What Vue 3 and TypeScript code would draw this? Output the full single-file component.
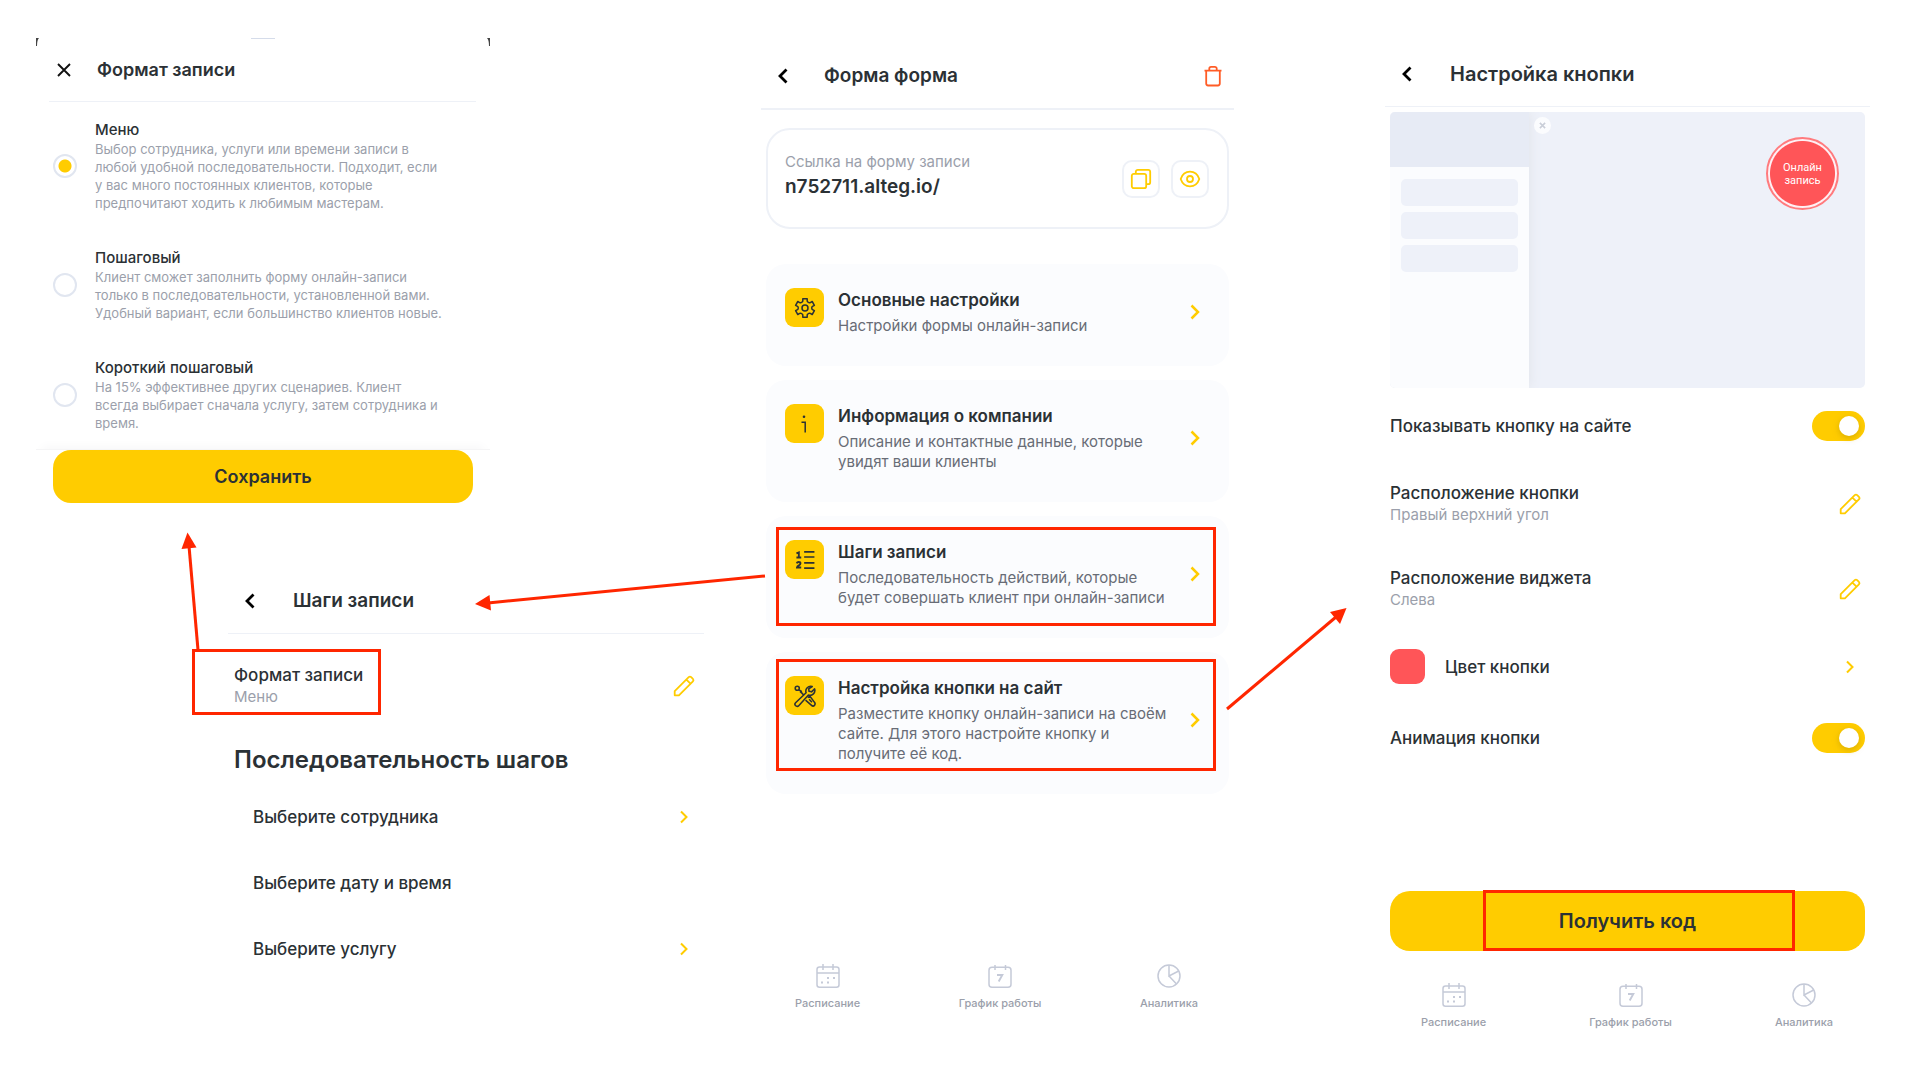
<script setup lang="ts">
import { ref } from 'vue'

interface FormatOption {
  id: string
  title: string
  text: string
}

interface SettingsCard {
  icon: string
  title: string
  text: string
  mark?: string
}

const formats: FormatOption[] = [
  {
    id: 'menu',
    title: 'Меню',
    text: 'Выбор сотрудника, услуги или времени записи в\nлюбой удобной последовательности. Подходит, если\nу вас много постоянных клиентов, которые\nпредпочитают ходить к любимым мастерам.',
  },
  {
    id: 'steps',
    title: 'Пошаговый',
    text: 'Клиент сможет заполнить форму онлайн-записи\nтолько в последовательности, установленной вами.\nУдобный вариант, если большинство клиентов новые.',
  },
  {
    id: 'short',
    title: 'Короткий пошаговый',
    text: 'На 15% эффективнее других сценариев. Клиент\nвсегда выбирает сначала услугу, затем сотрудника и\nвремя.',
  },
]

const steps = [
  { title: 'Выберите сотрудника', more: true },
  { title: 'Выберите дату и время', more: false },
  { title: 'Выберите услугу', more: true },
]

const cards: SettingsCard[] = [
  { icon: 'gear', title: 'Основные настройки', text: 'Настройки формы онлайн-записи' },
  { icon: 'info', title: 'Информация о компании', text: 'Описание и контактные данные, которые\nувидят ваши клиенты' },
  { icon: 'list', title: 'Шаги записи', text: 'Последовательность действий, которые\nбудет совершать клиент при онлайн-записи', mark: 'mark-steps' },
  { icon: 'tools', title: 'Настройка кнопки на сайт', text: 'Разместите кнопку онлайн-записи на своём\nсайте. Для этого настройте кнопку и\nполучите её код.', mark: 'mark-site' },
]

const tabs = [
  { icon: 'calendar', title: 'Расписание' },
  { icon: 'day', title: 'График работы' },
  { icon: 'pie', title: 'Аналитика' },
]

const places = [
  { title: 'Расположение кнопки', value: 'Правый верхний угол' },
  { title: 'Расположение виджета', value: 'Слева' },
]

const format = ref('menu')
const showButton = ref(true)
const animateButton = ref(true)
</script>

<template>
  <main class="board">
    <svg class="sprite" aria-hidden="true">
      <symbol id="i-back" viewBox="0 0 24 24"><path d="M15.500 5.500 9 12l6.500 6.500" fill="none" stroke="#000" stroke-width="2.800" /></symbol>
      <symbol id="i-close" viewBox="0 0 24 24"><path d="M6 6l12 12M18 6 6 18" fill="none" stroke="#111" stroke-width="1.900" /></symbol>
      <symbol id="i-next" viewBox="0 0 24 24"><path d="M9 6.500l5.500 5.500L9 17.500" fill="none" stroke="currentColor" stroke-width="2" /></symbol>
      <symbol id="i-next-bold" viewBox="0 0 24 24"><path d="M8.500 5.500 15 12l-6.500 6.500" fill="none" stroke="currentColor" stroke-width="2.500" /></symbol>
      <symbol id="i-pencil" viewBox="0 0 24 24">
        <path d="M2.700 21.300v-4.100L16.700 3.200a1.800 1.800 0 0 1 2.500 0l1.700 1.700a1.800 1.800 0 0 1 0 2.500L6.900 21.300zM14.400 5.600l4.100 4.100" fill="none" stroke="currentColor" stroke-width="1.800" stroke-linejoin="round" />
      </symbol>
      <symbol id="i-trash" viewBox="0 0 24 24">
        <path d="M3.500 6.600h17M5.200 6.600v13a1.900 1.900 0 0 0 1.900 1.900h9.800a1.900 1.900 0 0 0 1.900-1.900v-13M8.300 6.400V4.600a1.800 1.800 0 0 1 1.800-1.800h3.800a1.800 1.800 0 0 1 1.800 1.800v1.800" fill="none" stroke="#ff5c26" stroke-width="1.800" />
      </symbol>
      <symbol id="i-copy" viewBox="0 0 24 24">
        <g fill="none" stroke="currentColor" stroke-width="1.800">
          <rect x="2.800" y="6.800" width="14.400" height="14.400" rx="2" />
          <path d="M6.800 6.500V4.800a2 2 0 0 1 2-2h10.400a2 2 0 0 1 2 2v10.400a2 2 0 0 1-2 2h-1.700" />
        </g>
      </symbol>
      <symbol id="i-eye" viewBox="0 0 24 24">
        <g fill="none" stroke="currentColor" stroke-width="1.800">
          <path d="M2.700 12C4.300 7.200 7.800 4.700 12 4.700s7.700 2.500 9.300 7.300c-1.600 4.800-5.100 7.300-9.300 7.300S4.300 16.800 2.700 12z" stroke-linejoin="round" />
          <circle cx="12" cy="12" r="3" />
        </g>
      </symbol>
      <symbol id="i-gear" viewBox="0 0 24 24">
        <g fill="none" stroke="currentColor" stroke-width="1.500" stroke-linejoin="round">
          <circle cx="12" cy="12" r="3" />
          <path d="M9.800 2.700h4.400v2.200q0 .8.800 1.200l.9.500q.7.400 1.400 0l1.900-1.100 2.200 3.800-1.900 1.100q-.7.400-.7 1.200v.8q0 .8.700 1.200l1.900 1.100-2.200 3.800-1.900-1.100q-.7-.4-1.400 0l-.9.500q-.8.400-.8 1.200v2.200H9.800v-2.200q0-.8-.8-1.200l-.9-.5q-.7-.4-1.400 0l-1.900 1.100-2.200-3.800 1.900-1.100q.7-.4.700-1.200v-.8q0-.8-.7-1.200L2.600 9.300l2.200-3.800 1.900 1.100q.7.400 1.400 0l.9-.5q.8-.4.800-1.200z" />
        </g>
      </symbol>
      <symbol id="i-info" viewBox="0 0 24 24">
        <circle cx="11" cy="4.800" r="1.300" fill="currentColor" />
        <path d="M8.500 10.200h3.700V20.500" fill="none" stroke="currentColor" stroke-width="1.500" />
      </symbol>
      <symbol id="i-list" viewBox="-2 -1 28 27">
        <g fill="none" stroke="currentColor">
          <path d="M11 3h12M11 9h12M11 15.800h12M11 22h12" stroke-width="2" />
          <path d="M2 4.800l2.800-1.200v6.200M2 9.600h5.600M2.300 16.400q.5-1.500 2.400-1.500 2 0 2 1.600 0 1.100-1.900 2.300Q2.900 19.900 2.700 21.200H7.600" stroke-width="2.200" />
        </g>
      </symbol>
      <symbol id="i-tools" viewBox="-1 -1 26 26">
        <g fill="none" stroke="currentColor" stroke-width="1.700" stroke-linejoin="round">
          <circle cx="3.600" cy="3.600" r="2.200" />
          <path d="M5.400 5.400l2.300 1.200 1 2.400 2.100 2.100M8.700 9 6.600 7" />
          <path d="M19.800 1.700a5.300 5.300 0 0 0-6.600 6.800L1.800 19.300a2.300 2.300 0 0 0 3.400 3.200L15.700 11a5.300 5.300 0 0 0 6.700-6.700l-3.300 3.200-2.700-.6-.4-2.500z" />
          <path d="M15 13.800l2.300-1.700 5 6.800a2.200 2.200 0 0 1-3.200 3.200l-6.500-5.700M16.500 15.500l3 3.200" />
        </g>
      </symbol>
      <symbol id="i-calendar" viewBox="0 0 24 24">
        <g fill="none" stroke="currentColor" stroke-width="1.500">
          <rect x="1" y="3" width="22" height="20.200" rx="2.500" />
          <path d="M1 9h22M7 0v6M17 0v6" />
        </g>
        <path d="M11 13h2v2h-2zM17 13h2v2h-2zM5 17.500h2v2H5zM11 17.500h2v2h-2z" fill="currentColor" />
      </symbol>
      <symbol id="i-day" viewBox="0 0 24 24">
        <g fill="none" stroke="currentColor" stroke-width="1.500">
          <rect x="1" y="3.200" width="22" height="20" rx="3" />
          <path d="M7 1v5M17.500 1v5" />
          <path d="M9 11h5.300l-3.600 6.500" stroke-width="1.900" />
        </g>
      </symbol>
      <symbol id="i-pie" viewBox="0 0 24 24">
        <g fill="none" stroke="currentColor" stroke-width="1.500">
          <circle cx="12" cy="12" r="11" />
          <path d="M12 1v11l9.700-5M12 12l7.500 8" />
        </g>
      </symbol>
    </svg>

    <div class="col col-left">
      <section class="sheet">
        <svg class="corner corner-left" viewBox="0 0 4 8" aria-hidden="true"><path d="M0 0h3Q1 2 1 8H0z" /></svg>
        <svg class="corner corner-right" viewBox="0 0 4 8" aria-hidden="true"><path d="M4 0H1q2 2 2 8h1z" /></svg>
        <span class="handle"></span>
        <header class="head head-sheet">
          <button class="plain" type="button" aria-label="Закрыть"><svg class="ic"><use href="#i-close" /></svg></button>
          <h2>Формат записи</h2>
        </header>
        <div class="options" role="radiogroup" aria-label="Формат записи">
          <label v-for="o in formats" :key="o.id" class="option">
            <input v-model="format" type="radio" name="format" :value="o.id" />
            <span class="option-body">
              <span class="option-title">{{ o.title }}</span>
              <span class="option-text">{{ o.text }}</span>
            </span>
          </label>
        </div>
        <footer class="sheet-foot">
          <button class="save" type="button">Сохранить</button>
        </footer>
      </section>

      <section class="steps">
        <header class="head head-steps">
          <button class="plain" type="button" aria-label="Назад"><svg class="ic"><use href="#i-back" /></svg></button>
          <h2>Шаги записи</h2>
        </header>
        <div class="row row-format">
          <span class="pair">
            <span class="row-title">Формат записи</span>
            <span class="row-sub">Меню</span>
            <span class="mark mark-format"></span>
          </span>
          <button class="plain gold" type="button" aria-label="Изменить формат записи"><svg class="ic"><use href="#i-pencil" /></svg></button>
        </div>
        <h3>Последовательность шагов</h3>
        <ul class="step-list">
          <li v-for="s in steps" :key="s.title">
            <span>{{ s.title }}</span>
            <button v-if="s.more" class="plain gold" type="button" :aria-label="s.title"><svg class="ic"><use href="#i-next" /></svg></button>
          </li>
        </ul>
      </section>
    </div>

    <section class="col col-form">
      <header class="head head-form">
        <button class="plain" type="button" aria-label="Назад"><svg class="ic"><use href="#i-back" /></svg></button>
        <h2>Форма форма</h2>
        <button class="plain trash" type="button" aria-label="Удалить"><svg class="ic"><use href="#i-trash" /></svg></button>
      </header>
      <div class="link-card">
        <div class="link-text">
          <span class="link-label">Ссылка на форму записи</span>
          <a class="link-url" href="#">n752711.alteg.io/</a>
        </div>
        <button class="square" type="button" aria-label="Скопировать"><svg class="ic"><use href="#i-copy" /></svg></button>
        <button class="square" type="button" aria-label="Посмотреть"><svg class="ic"><use href="#i-eye" /></svg></button>
      </div>
      <nav class="cards">
        <a v-for="c in cards" :key="c.icon" class="card" href="#">
          <span class="tile"><svg class="ic"><use :href="'#i-' + c.icon" /></svg></span>
          <span class="card-body">
            <span class="card-title">{{ c.title }}</span>
            <span class="card-text">{{ c.text }}</span>
          </span>
          <svg class="ic gold"><use href="#i-next-bold" /></svg>
          <span v-if="c.mark" class="mark" :class="c.mark"></span>
        </a>
      </nav>
      <nav class="tabs tabs-form">
        <a v-for="t in tabs" :key="t.icon" href="#"><svg class="ic"><use :href="'#i-' + t.icon" /></svg>{{ t.title }}</a>
      </nav>
    </section>

    <section class="col col-button">
      <header class="head head-button">
        <button class="plain" type="button" aria-label="Назад"><svg class="ic"><use href="#i-back" /></svg></button>
        <h2>Настройка кнопки</h2>
      </header>
      <div class="settings">
        <div class="preview">
          <div class="side">
            <div class="side-head"></div>
            <div class="side-list"><i></i><i></i><i></i></div>
          </div>
          <span class="side-close"><svg viewBox="0 0 8 8"><path d="M1 1l6 6M7 1 1 7" fill="none" stroke="#c9ced8" stroke-width="1.800" /></svg></span>
          <button class="round" type="button">Онлайн<br />запись</button>
        </div>
        <label class="row row-show">
          <span class="row-title">Показывать кнопку на сайте</span>
          <input v-model="showButton" class="switch" type="checkbox" />
        </label>
        <div v-for="p in places" :key="p.title" class="row row-place">
          <span class="pair">
            <span class="row-title">{{ p.title }}</span>
            <span class="row-sub">{{ p.value }}</span>
          </span>
          <button class="plain gold" type="button" :aria-label="p.title"><svg class="ic"><use href="#i-pencil" /></svg></button>
        </div>
        <div class="row row-color">
          <span class="swatch"></span>
          <span class="row-title">Цвет кнопки</span>
          <button class="plain gold" type="button" aria-label="Цвет кнопки"><svg class="ic"><use href="#i-next" /></svg></button>
        </div>
        <label class="row row-anim">
          <span class="row-title">Анимация кнопки</span>
          <input v-model="animateButton" class="switch" type="checkbox" />
        </label>
        <button class="get-code" type="button">Получить код<span class="mark mark-code"></span></button>
      </div>
      <nav class="tabs tabs-button">
        <a v-for="t in tabs" :key="t.icon" href="#"><svg class="ic"><use :href="'#i-' + t.icon" /></svg>{{ t.title }}</a>
      </nav>
    </section>

    <svg class="arrows" viewBox="0 0 1920 1080" preserveAspectRatio="none" aria-hidden="true">
      <g fill="none" stroke="#ff2600" stroke-width="3">
        <path d="M198 650 189 546" />
        <path d="M765 576 488 603" />
        <path d="M1227 709 1336 617" />
      </g>
      <g fill="#ff2600">
        <path d="M187.500 532.500 196.500 547.500 181.500 549z" />
        <path d="M475 604 489.500 595 491 610.500z" />
        <path d="M1346.500 608 1340 624 1330 612z" />
      </g>
    </svg>
  </main>
</template>

<style>
body {
  background: #fff;
}
</style>

<style scoped>
.board {
  --ink: #2b3135;
  --muted: #9b9fab;
  --gold: #fc0;
  --red: #ff2600;
  --line: #eef1f7;
  position: relative;
  box-sizing: border-box;
  min-height: 100vh;
  padding: 38px 50px 0 36px;
  display: grid;
  grid-template-columns: 668fr 57fr 473fr 151fr 485fr;
  align-items: start;
  font-family: Inter, "Liberation Sans", sans-serif;
  color: var(--ink);
}
.board * {
  box-sizing: border-box;
}
.sprite {
  position: absolute;
  width: 0;
  height: 0;
}
h2,
h3,
ul {
  margin: 0;
  padding: 0;
  font-weight: 600;
}
a {
  color: inherit;
  text-decoration: none;
}
button {
  font-family: inherit;
  color: inherit;
  border: 0;
  padding: 0;
  cursor: pointer;
}
.plain {
  display: flex;
  background: none;
}
.gold {
  color: var(--gold);
}
.ic {
  display: block;
  flex: none;
  width: 24px;
  height: 24px;
}
.col-left {
  grid-column: 1;
}
.col-form {
  grid-column: 3;
  padding-top: 5px;
}
.col-button {
  grid-column: 5;
  padding-top: 3px;
}
.mark {
  position: absolute;
  border: 3px solid var(--red);
  pointer-events: none;
}
.arrows {
  position: absolute;
  inset: 0;
  width: 100%;
  height: 100%;
  pointer-events: none;
}

.head {
  display: flex;
  align-items: center;
  height: 66px;
  border-bottom: 1px solid var(--line);
  padding: 0 9px 0 10px;
}
.head h2 {
  margin-left: 31px;
  font-size: 20px;
  line-height: 24px;
}

/* booking format sheet */
.sheet {
  position: relative;
  max-width: 454px;
}
.corner {
  position: absolute;
  top: 0;
  width: 4px;
  height: 8px;
  fill: #444;
}
.corner-left {
  left: 0;
}
.corner-right {
  right: 0;
}
.handle {
  position: absolute;
  top: 0;
  left: 50%;
  width: 24px;
  height: 1px;
  margin-left: -12px;
  background: #d5dcea;
}
.head-sheet {
  height: 64px;
  margin: 0 14px 0 13px;
  padding: 0 3px;
}
.head-sheet h2 {
  margin-left: 21px;
  font-size: 18px;
}
.options {
  display: flex;
  flex-direction: column;
  gap: 36px;
  padding: 18px 17px 17px;
}
.option {
  display: flex;
  align-items: center;
  gap: 18px;
  cursor: pointer;
}
.option input {
  appearance: none;
  flex: none;
  width: 24px;
  height: 24px;
  margin: 0;
  border: 2px solid #e1e6f0;
  border-radius: 50%;
  background: #fff;
}
.option input:checked {
  background: radial-gradient(circle, var(--gold) 6px, #fff 7px);
}
.option-body {
  display: flex;
  flex-direction: column;
}
.option-title {
  font-size: 15px;
  line-height: 20px;
  font-weight: 500;
}
.option-text {
  font-size: 13px;
  line-height: 18px;
  color: var(--muted);
  white-space: pre;
}
.sheet-foot {
  border-top: 1px solid #f5f5f6;
  padding: 0 17px;
  box-shadow: 0 -8px 10px -6px #f7f7f8;
}
.save {
  display: block;
  width: 100%;
  height: 53px;
  border-radius: 18px;
  background: var(--gold);
  font-size: 18px;
  font-weight: 600;
}

/* booking steps */
.steps {
  margin: 65px 0 0 192px;
}
.head-steps h2,
.head-form h2 {
  font-size: 19px;
}
.row {
  display: flex;
  align-items: center;
  justify-content: space-between;
}
.pair {
  position: relative;
  display: flex;
  flex-direction: column;
}
.row-title {
  font-size: 17px;
  line-height: 22px;
  font-weight: 500;
}
.row-sub {
  font-size: 15px;
  line-height: 22px;
  color: var(--muted);
}
.row-format {
  padding: 30px 8px 0 6px;
}
.mark-format {
  top: -15px;
  right: -18px;
  bottom: -7px;
  left: -42px;
}
.steps h3 {
  margin: 36px 0 0 6px;
  font-size: 24px;
  line-height: 32px;
}
.step-list {
  list-style: none;
  padding: 8px 8px 0 25px;
}
.step-list li {
  display: flex;
  align-items: center;
  justify-content: space-between;
  height: 66px;
  font-size: 17px;
  font-weight: 500;
}

/* form screen */
.head-form {
  height: 67px;
  border-bottom-width: 2px;
}
.head-form h2 {
  margin-left: 29px;
}
.trash {
  margin-left: auto;
}
.link-card {
  display: flex;
  align-items: center;
  gap: 11px;
  margin: 18px 5px 0;
  height: 101px;
  padding: 0 18px 0 17px;
  border: 2px solid var(--line);
  border-radius: 24px;
}
.link-text {
  flex: 1;
  display: flex;
  flex-direction: column;
  padding-bottom: 7px;
}
.link-label {
  font-size: 15px;
  line-height: 24px;
  color: var(--muted);
}
.link-url {
  font-size: 19px;
  line-height: 26px;
  font-weight: 600;
}
.square {
  width: 38px;
  height: 38px;
  display: flex;
  align-items: center;
  justify-content: center;
  border: 2px solid var(--line);
  border-radius: 10px;
  background: #fff;
  color: var(--gold);
}
.cards {
  display: flex;
  flex-direction: column;
  gap: 14px;
  margin: 35px 5px 0;
}
.card {
  position: relative;
  display: flex;
  align-items: center;
  padding: 24px 22px 30px 19px;
  border-radius: 20px;
  background: #fbfcfe;
}
.tile {
  align-self: flex-start;
  flex: none;
  display: flex;
  align-items: center;
  justify-content: center;
  width: 39px;
  height: 39px;
  border-radius: 9px;
  background: var(--gold);
}
.card-body {
  flex: 1;
  display: flex;
  flex-direction: column;
  gap: 4px;
  margin-left: 14px;
}
.card-title {
  font-size: 17px;
  line-height: 24px;
  font-weight: 600;
}
.card-text {
  font-size: 15px;
  line-height: 20px;
  color: #686c76;
  white-space: pre;
}
.mark-steps {
  inset: 11px 13px 12px 10px;
}
.mark-site {
  inset: 7px 13px 23px 10px;
}
.tabs {
  display: flex;
  justify-content: space-between;
}
.tabs a {
  display: flex;
  flex-direction: column;
  align-items: center;
  gap: 8px;
  font-size: 11px;
  line-height: 14px;
  font-weight: 500;
  color: var(--muted);
}
.tabs .ic {
  color: #c5cad8;
}
.tabs-form {
  margin-top: 170px;
  padding: 0 36px 0 34px;
}

/* site button screen */
.settings {
  padding: 5px 5px 0;
}
.preview {
  position: relative;
  height: 276px;
  border-radius: 5px;
  background: #eef1f9;
  overflow: hidden;
}
.side {
  width: 139px;
  height: 100%;
  background: #fbfcfe;
  box-shadow: 0 0 12px #dfe2e8;
}
.side-head {
  height: 55px;
  background: #e7ebf5;
}
.side-list {
  display: flex;
  flex-direction: column;
  gap: 6px;
  padding: 12px 11px;
}
.side-list i {
  height: 27px;
  border-radius: 5px;
  background: #eef1f9;
}
.side-close {
  position: absolute;
  top: 5px;
  left: 144px;
  display: flex;
  align-items: center;
  justify-content: center;
  width: 17px;
  height: 17px;
  border-radius: 50%;
  background: #fbfcfe;
}
.side-close svg {
  width: 7px;
  height: 7px;
}
.round {
  position: absolute;
  top: 25px;
  right: 26px;
  width: 73px;
  height: 73px;
  border: 2px solid #ff7b7e;
  border-radius: 50%;
  background: radial-gradient(circle, #ff5558 32px, #fff0f4 33px);
  color: #fff;
  font-family: Roboto, sans-serif;
  font-size: 11px;
  line-height: 13px;
}
.row-show {
  margin-top: 23px;
}
.switch {
  appearance: none;
  width: 53px;
  height: 30px;
  margin: 0;
  padding: 5px 6px;
  border-radius: 15px;
  background: var(--gold);
  cursor: pointer;
}
.switch::before {
  content: "";
  display: block;
  width: 20px;
  height: 20px;
  border-radius: 50%;
  background: #fff;
  box-shadow: 0 2px 6px #b8930088;
}
.switch:checked::before {
  margin-left: auto;
}
.row-place {
  margin-top: 41px;
  padding-right: 3px;
}
.row-color {
  margin-top: 38px;
  padding-right: 3px;
}
.row-color .plain {
  margin-left: auto;
}
.swatch {
  width: 35px;
  height: 35px;
  margin-right: 20px;
  border-radius: 9px;
  background: #ff5558;
}
.row-anim {
  margin-top: 39px;
}
.get-code {
  position: relative;
  display: block;
  width: 100%;
  height: 60px;
  margin-top: 138px;
  border-radius: 20px;
  background: var(--gold);
  font-size: 20px;
  font-weight: 600;
}
.mark-code {
  inset: -1px 70px 0 93px;
}
.tabs-button {
  margin-top: 32px;
  padding: 0 37px 0 36px;
}
</style>
